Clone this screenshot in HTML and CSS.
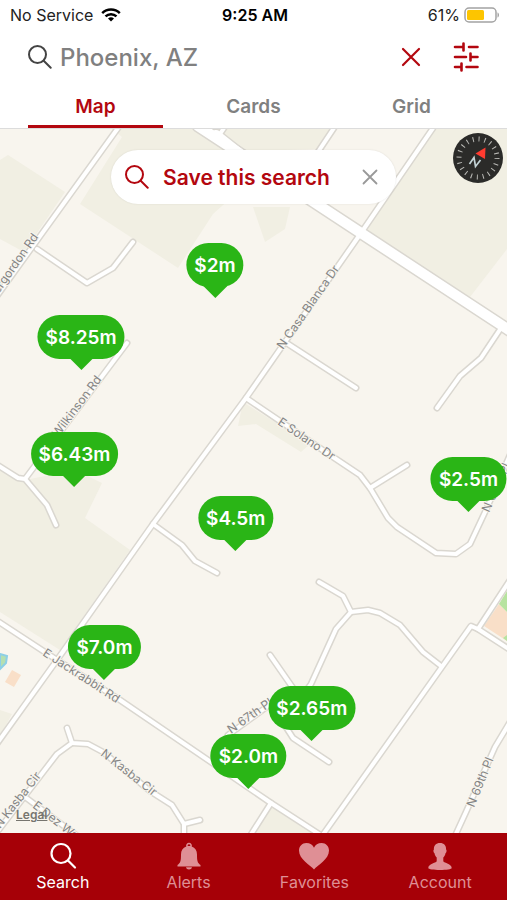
FILE: index.html
```
<!DOCTYPE html>
<html lang="en">

	<head>
		<meta charset="UTF-8">
		<meta name="viewport" content="width=device-width, initial-scale=1">
		<title>Phoenix, AZ</title>
		<link rel="stylesheet" href="styles.css">
	</head>

	<body>
		<div class="app">
			<div class="status">
				<div class="status-left">
					<span>No Service</span>
					<svg width="20" height="14" viewBox="0 0 20 14" fill="none" stroke="#000" stroke-width="2.5">
						<path d="M1.2 5.2a12.4 12.4 0 0 1 17.6 0M4.5 8.4a7.8 7.8 0 0 1 11 0" />
						<path d="M10 13.6l-3-3a4.3 4.3 0 0 1 6 0z" fill="#000" stroke="none" />
					</svg>
				</div>
				<strong>9:25 AM</strong>
				<div class="status-right">
					<span>61%</span>
					<svg width="36" height="16" viewBox="0 0 36 16">
						<rect x="1" y="1" width="31" height="14" rx="4" fill="#fff" stroke="#a3a3a3" stroke-width="1.5" />
						<rect x="3" y="3" width="17" height="10" rx="1.5" fill="#fdc500" />
						<path d="M33.5 5.5c2 .6 2 4.400 0 5z" fill="#a3a3a3" />
					</svg>
				</div>
			</div>

			<form class="search">
				<label for="place" aria-label="Location">
					<svg width="24" height="24" viewBox="0 0 24 24" fill="none" stroke="#444" stroke-width="2" stroke-linecap="round">
						<circle cx="9.500" cy="9.500" r="8.500" />
						<path d="M15.700 15.700l7 7" />
					</svg>
				</label>
				<input id="place" type="text" value="Phoenix, AZ">
				<button type="button" aria-label="Clear">
					<svg width="20" height="20" viewBox="0 0 20 20" stroke="#b3070f" stroke-width="2.200" stroke-linecap="round">
						<path d="M2 2l16 16M18 2L2 18" />
					</svg>
				</button>
				<button type="button" aria-label="Filters">
					<svg width="26" height="30" viewBox="0 0 26 30" fill="none" stroke="#b3070f" stroke-width="2.600" stroke-linecap="round">
						<path d="M2 5h8.500M10.500 1.500v7M16 5h8.500M2 15h11M17.500 11.500v7M17.500 15h7M2 25h6M8.500 21.500v7M13.500 25h11" />
					</svg>
				</button>
			</form>

			<div class="tabs">
				<button class="tab on" type="button">Map</button>
				<button class="tab" type="button">Cards</button>
				<button class="tab" type="button">Grid</button>
			</div>

			<div class="map">
				<svg class="ground" viewBox="0 129 507 704" preserveAspectRatio="xMidYMid slice">
					<defs>
						<g id="streets">
							<path d="M433 128L361 233 246 398 153 524 57 660-4 745" />
							<path d="M118 128L-6 300" />
							<path d="M37 249L87 283 113 268 133 242" />
							<path d="M334 128L318 152" />
							<path d="M285 342L356 388" />
							<path d="M501 328L481 358 460 376 437 408" />
							<path d="M246 398L333 457 360 475 370 488 388 518 397 527 436 553 456 554 470 544 486 510 510 455" />
							<path d="M370 488L407 465" />
							<path d="M319 582L343 596 351 612 368 610 380 613 400 625 423 652 441 666" />
							<path d="M351 612L336 629 311 684Q300 702 268 706L228 735" />
							<path d="M270 655L302 701" />
							<path d="M275 710L293 738 329 762" />
							<path d="M-4 620L57 660 120 700 271 803 322 836" />
							<path d="M322 836L471 626 478 629 512 651" />
							<path d="M478 629L512 577" />
							<path d="M271 803L250 836" />
							<path d="M510 722L495 747 466 812 455 836" />
							<path d="M67 728L72 743 88 744 103 752 150 791 172 805 184 824 184 838" />
							<path d="M184 824L200 820" />
							<path d="M72 743L57 754-6 836" />
							<path d="M25 797L76 835" />
							<path d="M-4 464L18 478 25 479 47 505 56 525" />
							<path d="M25 479L127 343" />
							<path d="M153 524L182 545 195 561 217 573" />
							<path d="M220 134L226 125" />
						</g>
						<g id="avenue">
							<path d="M198 126L361 233 515 334" />
							<path d="M216 135L250 162" />
						</g>
					</defs>

					<g fill="#f1efe3">
						<path d="M0 160l8-5 57 37-41 60-24-13z" />
						<path d="M122 137L112 129h220l-12 20-35 1-72 64-35 54-98-64z" />
						<path d="M433 129h74v120l-37 48-105-67z" />
						<path d="M253 207h37l-5 22-20 13z" />
						<path d="M243 402l67 42-9 8-45-28-18 2z" />
						<path d="M0 468l25 12 50-10 27 13-17 35 45 32-70 100-60-38z" />
						<path d="M0 710l12 4-12 22z" />
						<path d="M271 806l-18 28h63z" />
					</g>
					<path d="M484 626l15-22 8 8v29z" fill="#f9dfc8" />
					<path d="M499 604l8-13v21zM507 635v6l-4-3z" fill="#b7e3a0" />
					<path d="M12 670l9 5-7 12-9-5z" fill="#f9dfc8" />
					<path d="M0 654l7 2-1 7-6 6z" fill="#b5dfb0" stroke="#8ecfe6" stroke-width="2" />

					<use href="#streets" class="casing" />
					<use href="#avenue" class="casing big" />
					<use href="#streets" class="paving" />
					<use href="#avenue" class="paving big" />

					<g class="names">
						<text transform="translate(-11 308) rotate(-55)">Invergordon Rd</text>
						<text transform="translate(58 438) rotate(-53)">Wilkinson Rd</text>
						<text transform="translate(283 350) rotate(-55)">N Casa Blanca Dr</text>
						<text transform="translate(277 424) rotate(34)">E Solano Dr</text>
						<text transform="translate(489 513) rotate(-66)">N 68th Pl</text>
						<text transform="translate(42 655) rotate(33)">E Jackrabbit Rd</text>
						<text transform="translate(231 734) rotate(-35)">N 67th Pl</text>
						<text transform="translate(100 755) rotate(38)">N Kasba Cir</text>
						<text transform="translate(0 829) rotate(-52)">N Kasba Cir</text>
						<text transform="translate(32 807) rotate(38)">E Dez Way</text>
						<text transform="translate(474 808) rotate(-68)">N 69th Pl</text>
					</g>
				</svg>

				<div class="save">
					<button class="save-go" type="button">
						<svg width="24" height="24" viewBox="0 0 24 24" fill="none" stroke="#b3070f" stroke-width="2" stroke-linecap="round">
							<circle cx="9.500" cy="9.500" r="8.500" />
							<path d="M15.700 15.700l7 7" />
						</svg>
						Save this search
					</button>
					<button type="button" aria-label="Dismiss">
						<svg width="16" height="16" viewBox="0 0 16 16" stroke="#999" stroke-width="1.800" stroke-linecap="round">
							<path d="M1.500 1.500l13 13M14.500 1.500l-13 13" />
						</svg>
					</button>
				</div>

				<button class="compass" type="button" aria-label="Compass">
					<svg width="50" height="50" viewBox="-25 -25 50 50">
						<circle r="25" fill="#2b2b29" />
						<circle r="19" fill="none" stroke="#b9b9b5" stroke-width="5" stroke-dasharray="1 4.970" />
						<path d="M7.500-10.500L-2.500-4.500 7 1z" fill="#ff3b30" />
						<path d="M-8.500 6L-4-.5-2.500 8.500 2.500 2" fill="none" stroke="#c3d3d6" stroke-width="1.700" />
					</svg>
				</button>

				<button class="pin" type="button" style="left: 42.4%; top: 24%">$2m</button>
				<button class="pin" type="button" style="left: 16%; top: 34.2%">$8.25m</button>
				<button class="pin" type="button" style="left: 14.7%; top: 50.9%">$6.43m</button>
				<button class="pin" type="button" style="left: 46.5%; top: 60%">$4.5m</button>
				<button class="pin" type="button" style="left: 92.4%; top: 54.4%">$2.5m</button>
				<button class="pin" type="button" style="left: 20.6%; top: 78.2%">$7.0m</button>
				<button class="pin" type="button" style="left: 61.5%; top: 86.9%">$2.65m</button>
				<button class="pin" type="button" style="left: 49%; top: 93.7%">$2.0m</button>

				<a class="legal" href="#legal">Legal</a>
			</div>

			<nav class="bar">
				<a class="on" href="#search">
					<svg width="28" height="28" viewBox="0 0 28 28" fill="none" stroke="currentColor" stroke-width="2.200" stroke-linecap="round">
						<circle cx="12" cy="11.500" r="9.500" />
						<path d="M19 18.500l7 7" />
					</svg>
					Search
				</a>
				<a href="#alerts">
					<svg width="28" height="28" viewBox="0 0 28 28" fill="currentColor">
						<path d="M14 .8a2.800 2.800 0 0 1 2.700 3.700c3.500 1.200 5.300 4 5.300 8 0 6 .4 8.500 3.500 10.500v1.500H2.500V23C5.600 21 6 18.500 6 12.500c0-4 1.800-6.800 5.300-8A2.800 2.800 0 0 1 14 .8zm0 1.500a1.200 1.200 0 0 0-1.200 1.700h2.400A1.200 1.200 0 0 0 14 2.300zM11 25.200h6c-.5 3-5.500 3-6 0z" />
					</svg>
					Alerts
				</a>
				<a href="#favorites">
					<svg width="30" height="28" viewBox="0 0 30 28" fill="currentColor">
						<path d="M15 27.500C11.500 23 0 17.500 0 8.500 0 4.200 3.200 1 7.300 1 11 1 13.800 2.800 15 5.700 16.200 2.800 19 1 22.700 1 26.800 1 30 4.200 30 8.500c0 9-11.500 14.500-15 19z" />
					</svg>
					Favorites
				</a>
				<a href="#account">
					<svg width="28" height="28" viewBox="0 0 28 28" fill="currentColor">
						<path d="M14 1c4 0 6.300 2.600 6.100 6.500.9.400.5 3.200-.6 3.800-.4 2-1.200 3.300-2.200 4.300v3.600c1 1.900 8.400 2.400 8.400 6.800 0 1.300-5.500 2-11.700 2s-11.700-.7-11.700-2c0-4.400 7.400-4.900 8.400-6.800v-3.600c-1-1-1.800-2.300-2.200-4.300-1.100-.6-1.500-3.400-.6-3.800C7.700 3.600 10 1 14 1z" />
					</svg>
					Account
				</a>
			</nav>
		</div>
	</body>

</html>
```
FILE: styles.css
```
body {
	margin: 0;
	font-family: Inter, "Liberation Sans", sans-serif;
	background: #fff;
}

button,
input {
	margin: 0;
	padding: 0;
	border: 0;
	background: none;
	font: inherit;
	color: inherit;
}

button {
	cursor: pointer;
}

svg {
	display: block;
}

.app {
	min-height: 100vh;
	display: flex;
	flex-direction: column;
}

.status {
	display: grid;
	grid-template-columns: 1fr auto 1fr;
	align-items: center;
	height: 30px;
	padding: 0 7px 0 10px;
	font-size: 16px;
	color: #222;
}

.status strong {
	font-weight: 600;
	color: #000;
}

.status-left,
.status-right {
	display: flex;
	align-items: center;
	gap: 8px;
}

.status-right {
	justify-content: flex-end;
	gap: 4px;
}

.search {
	display: flex;
	align-items: center;
	height: 54px;
	padding: 0 28px;
	gap: 8px;
}

.search input {
	flex: 1;
	min-width: 0;
	font-size: 24px;
	font-weight: 500;
	color: #808080;
	outline: 0;
}

.search button + button {
	margin-left: 24px;
}

.tabs {
	display: grid;
	grid-template-columns: repeat(3, 1fr);
	gap: 23px;
	height: 44px;
	padding: 0 28px;
	border-bottom: 1px solid #dcdcdc;
}

.tab {
	padding-top: 3px;
	border-bottom: 3px solid transparent;
	font-size: 19px;
	font-weight: 600;
	color: #808080;
}

.tab.on {
	border-color: #b3070f;
	color: #b3070f;
}

.map {
	position: relative;
	flex: 1;
	display: flex;
	flex-direction: column;
	align-items: center;
	min-height: 480px;
	overflow: hidden;
	background: #f8f5ee;
}

.ground {
	position: absolute;
	top: 0;
	left: 0;
	width: 100%;
	height: 100%;
}

.casing,
.paving {
	fill: none;
	stroke: #dad7d0;
	stroke-width: 7px;
	stroke-linecap: round;
	stroke-linejoin: round;
}

.paving {
	stroke: #fff;
	stroke-width: 4px;
}

.casing.big {
	stroke-width: 13px;
}

.paving.big {
	stroke-width: 10px;
}

.names {
	font-size: 12px;
	fill: #858585;
	stroke: #f8f5ee;
	stroke-width: 2px;
	paint-order: stroke;
}

.save {
	position: relative;
	display: flex;
	align-items: center;
	gap: 32px;
	height: 54px;
	margin-top: 21px;
	padding: 0 18px 0 14px;
	border-radius: 27px;
	background: #fff;
	box-shadow: 0 0 2px rgba(0, 0, 0, .1);
}

.save-go {
	display: flex;
	align-items: center;
	gap: 14px;
	font-size: 21px;
	font-weight: 600;
	color: #b3070f;
}

.compass {
	position: absolute;
	top: 4px;
	right: 4px;
}

/* left / top of a pin is the spot its tip points at */
.pin {
	position: absolute;
	height: 44px;
	margin-top: -55px;
	padding: 1px 8px 0;
	border-radius: 22px;
	background: #2ab516;
	font-size: 19px;
	font-weight: 600;
	color: #fff;
	white-space: nowrap;
	transform: translateX(-50%);
}

.pin::after {
	content: "";
	position: absolute;
	top: 100%;
	left: 50%;
	margin: -1px 0 0 -12px;
	border: 12px solid transparent;
	border-top-color: #2ab516;
	border-bottom: 0;
}

.legal {
	position: absolute;
	left: 16px;
	bottom: 11px;
	font-size: 12px;
	font-weight: 600;
	color: #77756f;
}

.bar {
	display: grid;
	grid-template-columns: repeat(4, 1fr);
	height: 67px;
	padding-right: 4px;
	background: #a60007;
}

.bar a {
	display: flex;
	flex-direction: column;
	align-items: center;
	gap: 1px;
	padding-top: 9px;
	font-size: 16px;
	line-height: 22px;
	color: #df8f95;
	text-decoration: none;
}

.bar a.on {
	color: #fff;
}
```
